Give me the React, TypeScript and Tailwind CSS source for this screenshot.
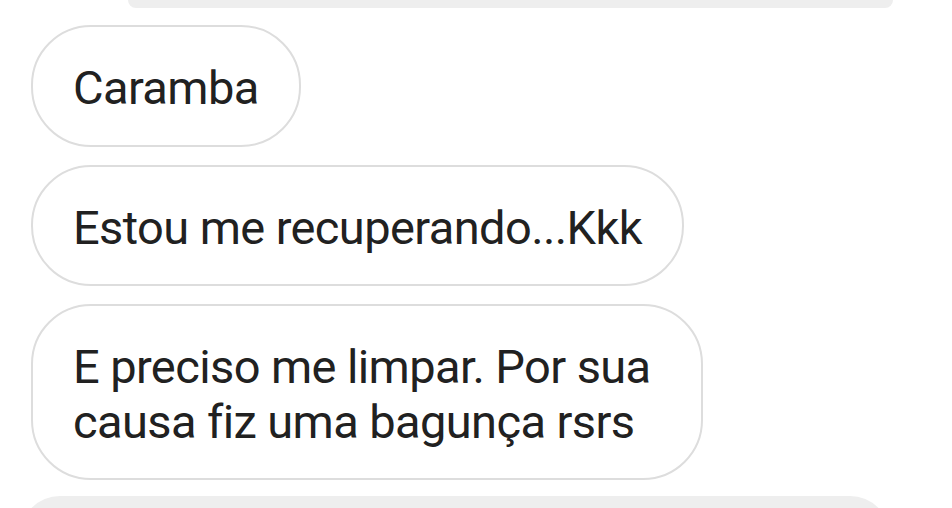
export default function App() {
  const bubbles: { lines: string[]; width?: string }[] = [
    { lines: ["Caramba"] },
    { lines: ["Estou me recuperando...Kkk"] },
    { lines: ["E preciso me limpar. Por sua", "causa fiz uma bagunça rsrs"], width: "w-[672px]" },
  ];
  return (
    <div
      className="w-[952px] h-[508px] overflow-hidden bg-white relative"
      style={{ fontFamily: "Roboto, 'Noto Sans', sans-serif" }}
    >
      <div className="flex flex-col">
        <div className="ml-[128px] w-[765px] h-[8px] bg-[#eeeeee] rounded-b-[40px]" />
        <div className="flex flex-col items-start gap-[18px] pt-[17px] pl-[31px]">
          {bubbles.map((b, i) => (
            <div
              key={i}
              className={`rounded-[60px] border-2 border-[#dddddd] bg-white px-[40px] pt-[34px] pb-[29px] text-[47px] leading-[54.5px] tracking-[-0.6px] text-[#212121] ${b.width ?? ""}`}
            >
              {b.lines.map((l, j) => (
                <div key={j} className="whitespace-nowrap">
                  {l}
                </div>
              ))}
            </div>
          ))}
        </div>
        <div className="mt-[16px] ml-[20px] w-[870px] h-[40px] bg-[#eeeeee] rounded-t-[40px]" />
      </div>
    </div>
  );
}
